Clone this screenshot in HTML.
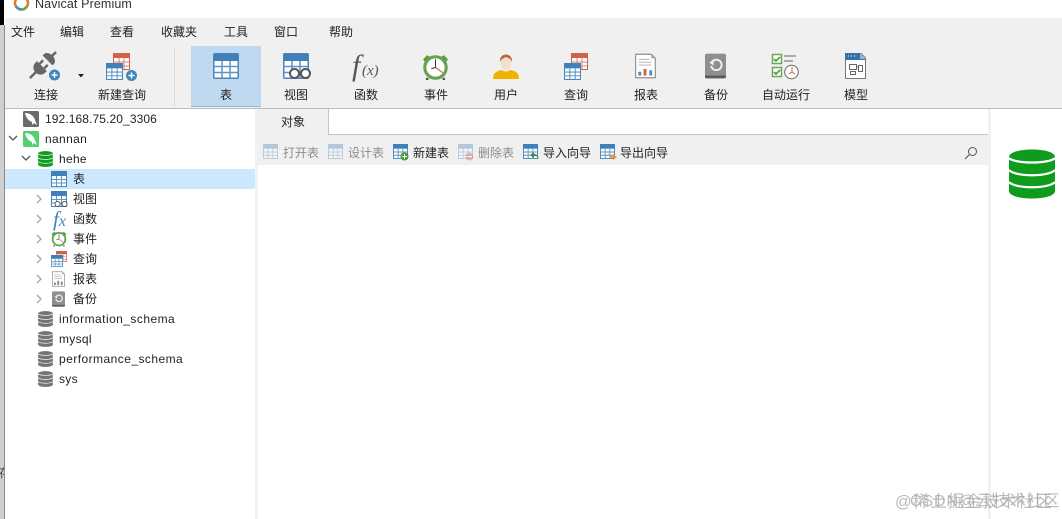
<!DOCTYPE html>
<html><head><meta charset="utf-8">
<style>
html,body{margin:0;padding:0;background:#fff}
#p{position:relative;width:1062px;height:519px;overflow:hidden;background:#fff;font-family:"Liberation Sans","Noto Sans CJK SC",sans-serif;font-size:12px;color:#222}
#p div,#p svg{position:absolute}
.t{white-space:nowrap;line-height:16px}
.c{white-space:nowrap;line-height:16px;text-align:center;width:70px}
.g{color:#8d8d8d}
</style></head><body><div id="p">
<svg width="0" height="0" style="left:0;top:0">
<defs>
<symbol id="tbl" viewBox="0 0 26 26"><rect x=".75" y=".75" width="24.500" height="24.500" rx="1" fill="#fff" stroke="#4a86bd" stroke-width="1.500"/><path d="M1 1h24v7H1z" fill="#3f80b9"/><path d="M1 13.500h24M1 19.500h24M9 8v17M17 8v17" stroke="#5b94c6" stroke-width="1.500" fill="none"/></symbol>
<symbol id="tbs" viewBox="0 0 16 16"><rect x=".5" y=".5" width="15" height="15" fill="#fff" stroke="#4a86bd"/><path d="M0 0h16v5H0z" fill="#3f80b9"/><path d="M1 8.500h14M1 12h14M5.500 5v10M10.500 5v10" stroke="#5b94c6" fill="none"/></symbol>
<symbol id="tbr" viewBox="0 0 17 17"><rect x=".5" y=".5" width="16" height="16" fill="#fff" stroke="#d0614a"/><path d="M0 0h17v5H0z" fill="#d0614a"/><path d="M1 9h15M1 13h15M6 5v11M11 5v11" stroke="#d9826f" fill="none"/></symbol>
<symbol id="db" viewBox="0 0 46 50"><path d="M0 8C0-2 46-2 46 8V42C46 52 0 52 0 42Z" fill="currentColor"/><path d="M0 9C6 15 40 15 46 9M0 21C6 28 40 28 46 21M0 33C6 40 40 40 46 33" stroke="#fff" stroke-width="2.200" fill="none"/></symbol>
<symbol id="clock" viewBox="0 0 26 26"><path d="M1 6l4-4 3 2-5 5zM25 6l-4-4-3 2 5 5z" fill="#5f9a45"/><circle cx="13" cy="14" r="10.300" fill="#fff" stroke="#66a34d" stroke-width="3"/><path d="M13 6v8" stroke="#333" fill="none"/><path d="M13 14l7 5" stroke="#d0614a" fill="none"/><path d="M13 14l-4 1" stroke="#333" fill="none"/><circle cx="5" cy="25" r="1.300" fill="#555"/><circle cx="21" cy="25" r="1.300" fill="#555"/></symbol>
<symbol id="rep" viewBox="0 0 22 26"><path d="M.7.7H17L21.300 5V25.300H.7Z" fill="#fff" stroke="#8f8f8f" stroke-width="1.200"/><path d="M17 1l4 4h-4z" fill="#aaa"/><path d="M4 6h11M4 9h13M4 12h13" stroke="#aaa"/><path d="M3.500 23v-4h3v4z" fill="#4a8cc4"/><path d="M9 23v-7h3v7z" fill="#d0614a"/><path d="M15 23v-5.500h3V23z" fill="#4a8cc4"/></symbol>
<symbol id="bak" viewBox="0 0 22 26"><rect width="22" height="26" rx="2" fill="#8f8f8f"/><path d="M0 23h22v1a2 2 0 0 1-2 2H2a2 2 0 0 1-2-2z" fill="#5c5c5c"/><path d="M8 8a5.500 5.500 0 1 1-1.500 5" stroke="#f2f2f2" stroke-width="2" fill="none"/><path d="M4.500 9.500l4.500-3.500v6.500z" fill="#f2f2f2"/></symbol>
<symbol id="dol" viewBox="0 0 16 16"><rect width="16" height="16" rx="1.500" fill="currentColor"/><path d="M2 2c5 0 9 3 10 7l2 5-3-2-2 2 0-3C6 10 3 7 2 2z" fill="#fff"/></symbol>
</defs>
</svg>

<!-- window left edge -->
<div style="left:0;top:0;width:4px;height:25px;background:#000"></div>
<div style="left:0;top:25px;width:4px;height:494px;background:#d0d0d0"></div>
<div style="left:4px;top:25px;width:1px;height:494px;background:#8a8a8a"></div>
<div class="t" style="left:-1px;top:465px;font-size:12px;width:5px;overflow:hidden;color:#444">存</div>

<!-- title -->
<svg style="left:13px;top:-5px" width="17" height="16" viewBox="0 0 17 16"><circle cx="8.500" cy="8" r="6.500" fill="none" stroke="#e3792b" stroke-width="2.500"/><path d="M3 11a6.500 6.500 0 0 0 5.500 3.500" stroke="#4a8cc4" stroke-width="2.500" fill="none"/><path d="M8.500 14.500a6.500 6.500 0 0 0 5.500-3.500" stroke="#6aa84f" stroke-width="2.500" fill="none"/></svg>
<div class="t" style="left:35px;top:-4px;font-size:12.500px;color:#333;letter-spacing:.12px">Navicat Premium</div>

<!-- menu + toolbar bg -->
<div style="left:5px;top:18px;width:1057px;height:90px;background:#f0f0f0"></div>
<div style="left:5px;top:108px;width:1057px;height:1px;background:#bdbdbd"></div>
<div class="t" style="left:11px;top:24px">文件</div>
<div class="t" style="left:60px;top:24px">编辑</div>
<div class="t" style="left:110px;top:24px">查看</div>
<div class="t" style="left:161px;top:24px">收藏夹</div>
<div class="t" style="left:224px;top:24px">工具</div>
<div class="t" style="left:274px;top:24px">窗口</div>
<div class="t" style="left:329px;top:24px">帮助</div>

<div style="left:174px;top:48px;width:1px;height:58px;background:#d9d9d9"></div>
<div style="left:191px;top:46px;width:70px;height:61px;background:#bfdaf0"></div>
<div style="left:191px;top:106px;width:70px;height:1px;background:#8db9dc"></div>

<!-- connect icon -->
<svg style="left:28px;top:50px" width="34" height="32" viewBox="0 0 34 32"><g transform="translate(16 14) rotate(-45)" fill="#666"><path d="M-3-7V7H-5C-10 7-12 3-12 0C-12-3-10-7-5-7Z"/><path d="M-3-4.500H2V-2H-3ZM-3 2H2V4.500H-3Z"/><path d="M5-7V7H7C10 7 12 3 12 0C12-3 10-7 7-7Z"/><path d="M-20-1.200H-11V1.200H-20ZM11-1.200H17V1.200H11Z"/></g><circle cx="26.500" cy="25" r="5.500" fill="#3f86bd"/><path d="M23.500 25h6M26.500 22v6" stroke="#fff" stroke-width="1.400"/></svg>
<svg style="left:78px;top:74px" width="7" height="4"><path d="M0 0h6L3 3.500z" fill="#222"/></svg>
<div class="c" style="left:11px;top:87px">连接</div>
<!-- new query -->
<svg style="left:113px;top:53px;" width="17" height="17"><use href="#tbr" width="17" height="17"/></svg>
<svg style="left:106px;top:63px" width="17" height="17"><use href="#tbs" width="17" height="17"/></svg>
<svg style="left:125px;top:69px" width="13" height="13" viewBox="0 0 13 13"><circle cx="6.500" cy="6.500" r="5.500" fill="#3f86bd"/><path d="M3.500 6.500h6M6.500 3.500v6" stroke="#fff" stroke-width="1.400"/></svg>
<div class="c" style="left:87px;top:87px">新建查询</div>

<svg style="left:213px;top:53px" width="26" height="26"><use href="#tbl" width="26" height="26"/></svg>
<div class="c" style="left:191px;top:87px">表</div>

<svg style="left:283px;top:53px" width="26" height="26"><use href="#tbl" width="26" height="26"/></svg>
<svg style="left:288px;top:67px" width="24" height="13" viewBox="0 0 24 13"><circle cx="6.500" cy="6.500" r="4.500" fill="#fff" stroke="#555" stroke-width="2"/><circle cx="17.500" cy="6.500" r="4.500" fill="#fff" stroke="#555" stroke-width="2"/></svg>
<div class="c" style="left:261px;top:87px">视图</div>

<div style="left:352px;top:48px;font:italic 30px/36px 'Liberation Serif',serif;color:#555">f</div>
<div style="left:362px;top:62px;font:italic 15px/18px 'Liberation Serif',serif;color:#555;white-space:nowrap">(x)</div>
<div class="c" style="left:331px;top:87px">函数</div>

<svg style="left:422px;top:53px" width="27" height="27"><use href="#clock" width="27" height="27"/></svg>
<div class="c" style="left:401px;top:87px">事件</div>

<svg style="left:493px;top:52px" width="26" height="28" viewBox="0 0 26 28"><path d="M8 13c-2-12 12-12 10 0-1 3-2 5-5 5s-4-2-5-5z" fill="#f5ddd0"/><path d="M7 10C6 0 20 0 19 10c-1-3-3-4-6-5-2 1-5 2-6 5z" fill="#b5673a"/><path d="M0 27c0-6 3-8 9-9 2 2 6 2 8 0 6 1 9 3 9 9z" fill="#f0b400"/></svg>
<div class="c" style="left:471px;top:87px">用户</div>

<svg style="left:571px;top:53px" width="17" height="17"><use href="#tbr" width="17" height="17"/></svg>
<svg style="left:564px;top:63px" width="17" height="17"><use href="#tbs" width="17" height="17"/></svg>
<div class="c" style="left:541px;top:87px">查询</div>

<svg style="left:635px;top:53px" width="21" height="26"><use href="#rep" width="21" height="26"/></svg>
<div class="c" style="left:611px;top:87px">报表</div>

<svg style="left:705px;top:53px" width="21" height="26"><use href="#bak" width="21" height="26"/></svg>
<div class="c" style="left:681px;top:87px">备份</div>

<svg style="left:771px;top:53px" width="29" height="27" viewBox="0 0 29 27"><rect x="1.500" y="1.500" width="9" height="9" fill="#fff" stroke="#6aa84f" stroke-width="1.500"/><rect x="1.500" y="14.500" width="9" height="9" fill="#fff" stroke="#6aa84f" stroke-width="1.500"/><path d="M3 6l2 2 4-4M3 19l2 2 4-4" stroke="#5f9a45" stroke-width="1.800" fill="none"/><path d="M13 3h12M13 8h9" stroke="#aaa" stroke-width="2"/><circle cx="20.500" cy="19" r="6.800" fill="#fff" stroke="#666"/><path d="M21 14v5l3 2M21 19l-3 2" stroke="#d0614a" fill="none"/></svg>
<div class="c" style="left:751px;top:87px">自动运行</div>

<svg style="left:845px;top:53px" width="21" height="26" viewBox="0 0 21 26"><path d="M.5.500H16L20.500 5V25.500H.5Z" fill="#fff" stroke="#777"/><path d="M0 0H15L21 7H0Z" fill="#3573a8"/><path d="M15 0l6 6h-6z" fill="#8db9dc"/><path d="M3 3h1M6 3h1M9 3h1" stroke="#fff"/><path d="M4.500 11.500h7v5h-7zM13.500 12.500h4v6h-4zM5.500 18.500h5v3h-5zM11.500 14h2" fill="none" stroke="#666"/></svg>
<div class="c" style="left:821px;top:87px">模型</div>

<!-- sidebar -->
<div style="left:5px;top:169px;width:250px;height:20px;background:#cce8ff"></div>
<div style="left:255px;top:109px;width:3px;height:410px;background:#f2f2f2"></div>

<svg style="left:23px;top:111px;color:#6b6b6b" width="16" height="16"><use href="#dol" width="16" height="16"/></svg>
<div class="t" style="left:45px;top:111px;letter-spacing:.1px">192.168.75.20_3306</div>
<svg style="left:8px;top:135px" width="10" height="7"><path d="M1 1l4 4 4-4" stroke="#555" stroke-width="1.300" fill="none"/></svg>
<svg style="left:23px;top:131px;color:#53cf6c" width="16" height="16"><use href="#dol" width="16" height="16"/></svg>
<div class="t" style="left:45px;top:131px;letter-spacing:.35px">nannan</div>
<svg style="left:21px;top:155px" width="10" height="7"><path d="M1 1l4 4 4-4" stroke="#555" stroke-width="1.300" fill="none"/></svg>
<svg style="left:38px;top:151px;color:#0f9b1c" width="15" height="16"><use href="#db" width="15" height="16"/></svg>
<div class="t" style="left:59px;top:151px;letter-spacing:.3px">hehe</div>

<svg style="left:51px;top:171px" width="16" height="16"><use href="#tbs" width="16" height="16"/></svg>
<div class="t" style="left:73px;top:171px">表</div>

<svg style="left:36px;top:194px" width="7" height="10"><path d="M1 1l4 4-4 4" stroke="#aaa" stroke-width="1.400" fill="none"/></svg>
<svg style="left:51px;top:191px" width="16" height="16"><use href="#tbs" width="16" height="16"/></svg>
<svg style="left:54px;top:200px" width="14" height="8" viewBox="0 0 14 8"><circle cx="3.500" cy="4" r="2.500" fill="#fff" stroke="#555"/><circle cx="10.500" cy="4" r="2.500" fill="#fff" stroke="#555"/></svg>
<div class="t" style="left:73px;top:191px">视图</div>

<svg style="left:36px;top:214px" width="7" height="10"><path d="M1 1l4 4-4 4" stroke="#aaa" stroke-width="1.400" fill="none"/></svg>
<div style="left:53px;top:207px;font:italic 21px/24px 'Liberation Serif',serif;color:#3f80b9;white-space:nowrap">f<span style="font-size:16px;color:#3f80b9">x</span></div>
<div class="t" style="left:73px;top:211px">函数</div>

<svg style="left:36px;top:234px" width="7" height="10"><path d="M1 1l4 4-4 4" stroke="#aaa" stroke-width="1.400" fill="none"/></svg>
<svg style="left:51px;top:230px" width="16" height="17"><use href="#clock" width="16" height="17"/></svg>
<div class="t" style="left:73px;top:231px">事件</div>

<svg style="left:36px;top:254px" width="7" height="10"><path d="M1 1l4 4-4 4" stroke="#aaa" stroke-width="1.400" fill="none"/></svg>
<svg style="left:56px;top:251px" width="11" height="11"><use href="#tbr" width="11" height="11"/></svg>
<svg style="left:51px;top:255px" width="12" height="12"><use href="#tbs" width="12" height="12"/></svg>
<div class="t" style="left:73px;top:251px">查询</div>

<svg style="left:36px;top:274px" width="7" height="10"><path d="M1 1l4 4-4 4" stroke="#aaa" stroke-width="1.400" fill="none"/></svg>
<svg style="left:52px;top:271px" width="13" height="16"><use href="#rep" width="13" height="16"/></svg>
<div class="t" style="left:73px;top:271px">报表</div>

<svg style="left:36px;top:294px" width="7" height="10"><path d="M1 1l4 4-4 4" stroke="#aaa" stroke-width="1.400" fill="none"/></svg>
<svg style="left:52px;top:291px" width="13" height="16"><use href="#bak" width="13" height="16"/></svg>
<div class="t" style="left:73px;top:291px">备份</div>

<svg style="left:38px;top:311px;color:#747474" width="15" height="16"><use href="#db" width="15" height="16"/></svg>
<div class="t" style="left:59px;top:311px;letter-spacing:.45px">information_schema</div>
<svg style="left:38px;top:331px;color:#747474" width="15" height="16"><use href="#db" width="15" height="16"/></svg>
<div class="t" style="left:59px;top:331px;letter-spacing:.3px">mysql</div>
<svg style="left:38px;top:351px;color:#747474" width="15" height="16"><use href="#db" width="15" height="16"/></svg>
<div class="t" style="left:59px;top:351px;letter-spacing:.45px">performance_schema</div>
<svg style="left:38px;top:371px;color:#747474" width="15" height="16"><use href="#db" width="15" height="16"/></svg>
<div class="t" style="left:59px;top:371px;letter-spacing:.3px">sys</div>

<!-- tab strip -->
<div style="left:258px;top:109px;width:70px;height:26px;background:#f0f0f0"></div>
<div style="left:328px;top:109px;width:1px;height:26px;background:#c4c4c4"></div>
<div style="left:329px;top:134px;width:659px;height:1px;background:#c4c4c4"></div>
<div class="c" style="left:258px;top:114px">对象</div>
<div style="left:258px;top:135px;width:730px;height:30px;background:#f0f0f0"></div>
<div style="left:988px;top:109px;width:3px;height:410px;background:#f2f2f2"></div>

<!-- object toolbar -->
<svg style="left:263px;top:144px;opacity:.35" width="15" height="16"><use href="#tbs" width="15" height="15"/></svg>
<div class="t g" style="left:283px;top:145px">打开表</div>
<svg style="left:328px;top:144px;opacity:.35" width="15" height="16"><use href="#tbs" width="15" height="15"/></svg>
<div class="t g" style="left:348px;top:145px">设计表</div>
<svg style="left:393px;top:144px" width="15" height="15"><use href="#tbs" width="15" height="15"/></svg>
<svg style="left:400px;top:152px" width="9" height="9" viewBox="0 0 9 9"><circle cx="4.500" cy="4.500" r="4" fill="#4c9a37"/><path d="M2 4.500h5M4.500 2v5" stroke="#fff"/></svg>
<div class="t" style="left:413px;top:145px">新建表</div>
<svg style="left:458px;top:144px;opacity:.35" width="15" height="15"><use href="#tbs" width="15" height="15"/></svg>
<svg style="left:465px;top:152px;opacity:.55" width="9" height="9" viewBox="0 0 9 9"><circle cx="4.500" cy="4.500" r="4" fill="#d98a7c"/><path d="M2 4.500h5" stroke="#fff"/></svg>
<div class="t g" style="left:478px;top:145px">删除表</div>
<svg style="left:523px;top:144px" width="15" height="15"><use href="#tbs" width="15" height="15"/></svg>
<svg style="left:530px;top:151px" width="10" height="10" viewBox="0 0 10 10"><path d="M9 9C9 6 7 5 4 5V7L0 4 4 1V3C7 3 9 5 9 9Z" fill="#3f8f3a"/></svg>
<div class="t" style="left:543px;top:145px">导入向导</div>
<svg style="left:600px;top:144px" width="15" height="15"><use href="#tbs" width="15" height="15"/></svg>
<svg style="left:607px;top:151px" width="10" height="10" viewBox="0 0 10 10"><path d="M1 1C1 4 3 5 6 5V3L10 6 6 9V7C3 7 1 5 1 1Z" fill="#e8962e"/></svg>
<div class="t" style="left:620px;top:145px">导出向导</div>
<svg style="left:964px;top:146px" width="14" height="14" viewBox="0 0 14 14"><circle cx="8.500" cy="5.500" r="4" fill="none" stroke="#555"/><path d="M5.500 8.500L1 13" stroke="#555" stroke-width="1.200"/></svg>

<!-- right db -->
<svg style="left:1009px;top:149px;color:#0f9b1c" width="46" height="50"><use href="#db" width="46" height="50"/></svg>

<!-- watermark -->
<div class="t" style="left:895px;top:494px;font-size:16.500px;letter-spacing:1px;color:#a5a5a5;opacity:.75">@稀土掘金技术社区</div>
<div class="t" style="left:910px;top:494px;font-size:16px;letter-spacing:.9px;color:#a5a5a5;opacity:.75">CSDN@云技术社区</div>
</div></body></html>
